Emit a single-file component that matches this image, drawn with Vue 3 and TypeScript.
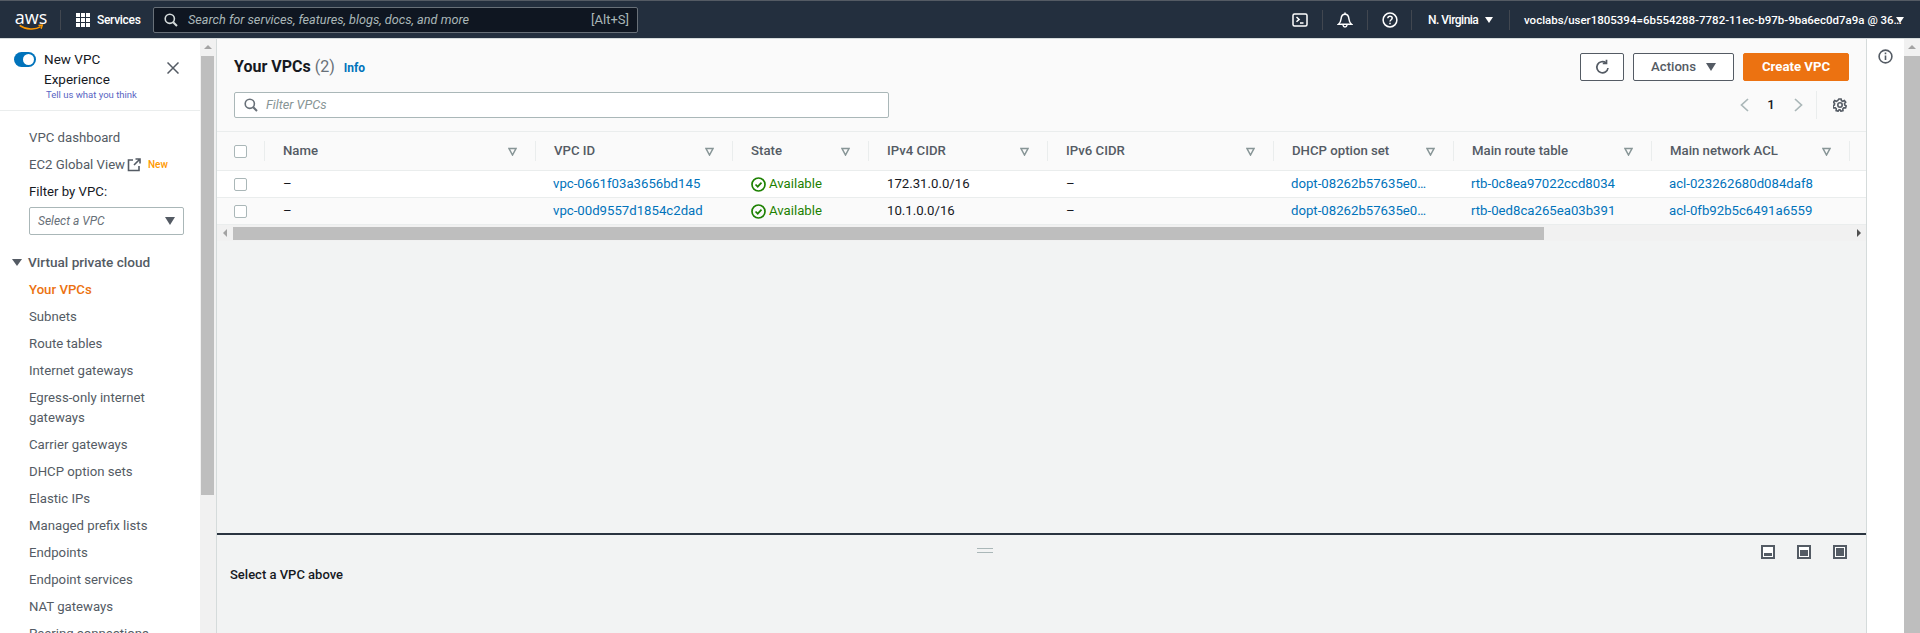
<script setup lang="ts">
interface Vpc {
  id: string
  cidr: string
  dhcp: string
  route: string
  acl: string
}

const columns = ['Name', 'VPC ID', 'State', 'IPv4 CIDR', 'IPv6 CIDR', 'DHCP option set', 'Main route table', 'Main network ACL']

const vpcs: Vpc[] = [
  { id: 'vpc-0661f03a3656bd145', cidr: '172.31.0.0/16', dhcp: 'dopt-08262b57635e0…', route: 'rtb-0c8ea97022ccd8034', acl: 'acl-023262680d084daf8' },
  { id: 'vpc-00d9557d1854c2dad', cidr: '10.1.0.0/16', dhcp: 'dopt-08262b57635e0…', route: 'rtb-0ed8ca265ea03b391', acl: 'acl-0fb92b5c6491a6559' },
]

const navItems = [
  'Subnets',
  'Route tables',
  'Internet gateways',
  'Egress-only internet gateways',
  'Carrier gateways',
  'DHCP option sets',
  'Elastic IPs',
  'Managed prefix lists',
  'Endpoints',
  'Endpoint services',
  'NAT gateways',
  'Peering connections',
]
</script>

<template>
  <div class="console">
    <header class="topbar">
      <div class="logo">
        <span class="logo-text">aws</span>
        <svg width="28" height="8" viewBox="0 0 28 8"><path d="M1 1.500C8 6.500 19 7 25 3" fill="none" stroke="#ff9900" stroke-width="1.800" /><path d="M22.500 1.500L27 1.200 25.600 5.400" fill="none" stroke="#ff9900" stroke-width="1.500" /></svg>
      </div>
      <i class="bar-sep sep-logo"></i>
      <svg class="grid-icon" width="14" height="14" viewBox="0 0 14 14" fill="#fff">
        <template v-for="y in [0, 5, 10]" :key="y">
          <rect v-for="x in [0, 5, 10]" :key="x" :x="x" :y="y" width="4" height="4" />
        </template>
      </svg>
      <span class="services">Services</span>
      <div class="search">
        <svg width="14" height="14" viewBox="0 0 14 14" fill="none" stroke="#d5dbdb" stroke-width="1.600"><circle cx="5.800" cy="5.800" r="4.600" /><path d="M9.200 9.200L13 13" stroke-width="2" /></svg>
        <span class="search-text">Search for services, features, blogs, docs, and more</span>
        <span class="search-key">[Alt+S]</span>
      </div>
      <div class="bar-right">
        <svg width="16" height="14" viewBox="0 0 16 14" fill="none" stroke="#fff" stroke-width="1.500"><rect x="1" y="1" width="14" height="12" rx="1.500" /><path d="M4.500 4l2.600 2.400-2.600 2.400M8 10h3.500" /></svg>
        <i class="bar-sep sep-a"></i>
        <svg width="16" height="16" viewBox="0 0 16 16" fill="none" stroke="#fff" stroke-width="1.500"><path d="M1.500 12.200c2-1.700 2.400-2.800 2.600-5.400C4.300 4 5.800 2.200 8 2.200s3.700 1.800 3.900 4.600c.2 2.600.6 3.700 2.600 5.400z" /><path d="M6 13c.2 1.400 1 2 2 2s1.800-.6 2-2M8 .5v1.700" /></svg>
        <i class="bar-sep sep-a"></i>
        <svg width="16" height="16" viewBox="0 0 16 16" fill="none" stroke="#fff" stroke-width="1.500"><circle cx="8" cy="8" r="6.900" /><path d="M5.800 6.200C5.900 4.900 6.800 4.200 8 4.200c1.300 0 2.200.8 2.200 1.900 0 1.700-2.200 1.600-2.200 3.500" /><path d="M8 10.800v1.500" /></svg>
        <i class="bar-sep sep-b"></i>
        <span class="region">N. Virginia</span>
        <i class="caret-white caret-region"></i>
        <i class="bar-sep sep-c"></i>
        <span class="account">voclabs/user1805394=6b554288-7782-11ec-b97b-9ba6ec0d7a9a @ 36…</span>
        <i class="caret-white caret-account"></i>
      </div>
    </header>

    <div class="workspace">
      <aside class="sidebar">
        <div class="experience">
          <span class="toggle"></span>
          <div class="experience-text">
            <div>New VPC</div>
            <div>Experience</div>
            <a class="feedback">Tell us what you think</a>
          </div>
          <svg class="close" width="12" height="12" viewBox="0 0 12 12" stroke="#545b64" stroke-width="1.500"><path d="M.5.5l11 11M11.500.5l-11 11" /></svg>
        </div>
        <nav class="nav">
          <a class="nav-item">VPC dashboard</a>
          <a class="nav-item nav-global">
            <span class="global-label">EC2 Global View</span>
            <svg width="14" height="14" viewBox="0 0 14 14" fill="none" stroke="#545b64" stroke-width="1.600"><path d="M6 2H1.500v10.500H12V8M7 7l6-6M8.500 1H13v4.500" /></svg>
            <span class="new-tag">New</span>
          </a>
          <div class="nav-item filter-label">Filter by VPC:</div>
          <div class="vpc-select"><span>Select a VPC</span><i class="caret-dark"></i></div>
          <div class="nav-section"><i class="caret-section"></i>Virtual private cloud</div>
          <a class="nav-item active">Your VPCs</a>
          <a v-for="item in navItems" :key="item" class="nav-item">{{ item }}</a>
        </nav>
      </aside>
      <div class="scrollbar">
        <i class="arrow-up"></i>
        <div class="thumb left-thumb"></div>
      </div>

      <main class="main">
        <section class="list-head">
          <div class="head-row">
            <h1 class="title">Your VPCs <span class="count">(2)</span></h1>
            <a class="info">Info</a>
            <div class="actions">
              <button class="btn btn-icon">
                <svg width="15" height="16" viewBox="0 0 15 16" fill="none" stroke="#545b64" stroke-width="1.700"><path d="M13 9a5.600 5.600 0 1 1-2-5.100" /><path d="M11.500 .8v3.700H7.800" /></svg>
              </button>
              <button class="btn btn-actions">Actions<i class="caret-dark"></i></button>
              <button class="btn btn-primary">Create VPC</button>
            </div>
          </div>
          <div class="filter-row">
            <div class="filter-input">
              <svg width="14" height="14" viewBox="0 0 14 14" fill="none" stroke="#687078" stroke-width="1.600"><circle cx="5.800" cy="5.800" r="4.600" /><path d="M9.200 9.200L13 13" stroke-width="2" /></svg>
              <span>Filter VPCs</span>
            </div>
            <div class="pager">
              <svg width="9" height="14" viewBox="0 0 9 14" fill="none" stroke="#aab7b8" stroke-width="1.700"><path d="M8 1L1.500 7 8 13" /></svg>
              <b>1</b>
              <svg width="9" height="14" viewBox="0 0 9 14" fill="none" stroke="#aab7b8" stroke-width="1.700"><path d="M1 1l6.500 6L1 13" /></svg>
              <i class="pager-sep"></i>
              <svg width="14" height="14" viewBox="0 0 14 14" fill="none" stroke="#545b64" stroke-width="1.600"><circle cx="7" cy="7" r="2.200" /><path d="M5.900 1h2.200l.4 1.700 1.300.6 1.600-.8 1.300 1.700-1.200 1.300.2 1.500 1.500.9-.6 2-1.800-.1-1 1.100.2 1.800-2.100.5-.9-1.500H6.100l-1 1.500-2-.6.200-1.800-1-1.100-1.800.1-.6-2 1.500-.9.200-1.500L.4 4.200l1.300-1.700 1.600.8 1.300-.6z" /></svg>
            </div>
          </div>
        </section>

        <section class="table">
          <div class="tr th-row">
            <div class="cell-check head-check"><i class="check"></i></div>
            <div v-for="col in columns" :key="col" class="th">
              <span>{{ col }}</span>
              <svg width="9" height="9" viewBox="0 0 9 9" fill="none" stroke="#879596" stroke-width="1.500"><path d="M1 1.500h7L4.500 8z" /></svg>
            </div>
          </div>
          <div v-for="vpc in vpcs" :key="vpc.id" class="tr body-row">
            <div class="cell-check"><i class="check"></i></div>
            <div class="td">–</div>
            <a class="td link">{{ vpc.id }}</a>
            <div class="td state">
              <svg width="15" height="15" viewBox="0 0 15 15" fill="none" stroke="#1d8102" stroke-width="1.700"><circle cx="7.500" cy="7.500" r="6.500" /><path d="M4.500 7.500l2.200 2.200 3.800-4" /></svg>
              Available
            </div>
            <div class="td">{{ vpc.cidr }}</div>
            <div class="td">–</div>
            <a class="td link">{{ vpc.dhcp }}</a>
            <a class="td link">{{ vpc.route }}</a>
            <a class="td link">{{ vpc.acl }}</a>
          </div>
          <div class="h-scroll">
            <i class="arrow-left"></i>
            <div class="h-thumb"></div>
            <i class="arrow-right"></i>
          </div>
        </section>

        <div class="spacer"></div>

        <section class="detail">
          <div class="drag-handle"></div>
          <div class="detail-row">
            <strong>Select a VPC above</strong>
            <div class="panel-icons">
              <span class="panel-icon"><i class="fill-low"></i></span>
              <span class="panel-icon"><i class="fill-mid"></i></span>
              <span class="panel-icon"><i class="fill-full"></i></span>
            </div>
          </div>
        </section>
      </main>

      <aside class="tools">
        <svg width="15" height="15" viewBox="0 0 15 15" fill="none" stroke="#545b64" stroke-width="1.600"><circle cx="7.500" cy="7.500" r="6.400" /><path d="M7.500 6.500v4.500M7.500 3.500v1.800" /></svg>
      </aside>
      <div class="scrollbar">
        <i class="arrow-up"></i>
        <div class="thumb right-thumb"></div>
      </div>
    </div>
  </div>
</template>

<style>
html, body { margin: 0; background: #fff; overflow: hidden; }
</style>

<style scoped>
.console {
  width: 1920px;
  height: 633px;
  overflow: hidden;
  display: flex;
  flex-direction: column;
  font-family: Roboto, "Noto Sans", sans-serif;
  font-size: 13.200px;
  line-height: 20px;
  color: #16191f;
}
i { display: block; font-style: normal; }
a { color: inherit; }

.topbar {
  height: 38px;
  flex: none;
  box-sizing: border-box;
  background: #232f3e;
  border-top: 1px solid #545b64;
  display: flex;
  align-items: center;
  color: #fff;
  padding-left: 17px;
}
.logo { width: 28px; display: flex; flex-direction: column; align-items: center; height: 22px; }
.logo-text { font-size: 18px; line-height: 16px; font-family: "Open Sans", sans-serif; font-weight: 400; }
.logo svg { margin-top: -1px; }
.bar-sep { width: 1px; height: 20px; background: #414750; flex: none; }
.sep-logo { margin-left: 15px; }
.grid-icon { margin-left: 15px; }
.services { margin-left: 7px; font-size: 12px; letter-spacing: -.3px; font-weight: 500; width: 56px; }
.search {
  width: 485px;
  height: 26px;
  box-sizing: border-box;
  background: #0f1621;
  border: 1px solid #687078;
  border-radius: 2px;
  display: flex;
  align-items: center;
  padding: 0 8px 0 10px;
  color: #aab7b8;
}
.search-text { margin-left: 10px; font-style: italic; font-size: 12.700px; flex: 1; }
.search-key { font-size: 13px; }
.bar-right { margin-left: 654px; display: flex; align-items: center; }
.sep-a { margin: 0 14px; }
.sep-b { margin: 0 16px 0 13px; }
.sep-c { margin: 0 14px 0 16px; }
.region { font-size: 12px; letter-spacing: -.5px; font-weight: 500; width: 52px; white-space: nowrap; }
.account { font-size: 11.500px; font-weight: 500; white-space: nowrap; width: 367px; }
.caret-white { width: 0; height: 0; border-left: 4px solid transparent; border-right: 4px solid transparent; border-top: 6px solid #fff; }
.caret-region { margin-left: 5px; }
.caret-account { margin-left: 5px; }

.workspace { flex: 1; display: flex; min-height: 0; border-top: 1px solid #d5dbdb; }
.sidebar { width: 200px; flex: none; overflow: hidden; background: #fff; }
.experience {
  height: 61px;
  padding-top: 10px;
  display: flex;
  border-bottom: 1px solid #eaeded;
}
.toggle {
  width: 22px;
  height: 15px;
  margin: 3px 0 0 14px;
  border-radius: 8px;
  background: #0073bb;
  position: relative;
  flex: none;
}
.toggle::after { content: ""; position: absolute; right: 2px; top: 2px; width: 11px; height: 11px; border-radius: 50%; background: #fff; }
.experience-text { margin-left: 8px; width: 123px; font-size: 13.500px; color: #16191f; }
.feedback { display: block; margin: -2px 0 0 2px; font-size: 9.500px; line-height: 16px; color: #5865c3; white-space: nowrap; }
.close { margin-top: 13px; flex: none; }
.nav { padding-top: 17px; }
.nav-item { display: block; padding: 0 15px 7px 29px; color: #545b64; }
.nav-global { display: flex; align-items: center; height: 20px; }
.global-label { width: 98px; white-space: nowrap; }
.new-tag { color: #ff9900; font-size: 10px; font-weight: 500; margin-left: 7px; }
.filter-label { color: #16191f; padding-bottom: 5px; }
.vpc-select {
  margin: 0 16px 17px 29px;
  height: 28px;
  box-sizing: border-box;
  border: 1px solid #aab7b8;
  border-radius: 2px;
  display: flex;
  align-items: center;
  justify-content: space-between;
  padding: 0 8px;
  font-style: italic;
  font-size: 12px;
  color: #687078;
}
.caret-dark { width: 0; height: 0; border-left: 5px solid transparent; border-right: 5px solid transparent; border-top: 8px solid #545b64; }
.nav-section { display: flex; align-items: center; padding: 0 0 8px 12px; font-weight: 500; font-size: 13.600px; color: #545b64; }
.caret-section { width: 0; height: 0; border-left: 5px solid transparent; border-right: 5px solid transparent; border-top: 7px solid #545b64; margin-right: 6px; }
.active { color: #ec7211; font-weight: 500; }

.scrollbar { width: 16px; flex: none; background: #f1f1f1; position: relative; padding-top: 17px; box-sizing: border-box; }
.arrow-up { position: absolute; top: 6px; left: 4px; width: 0; height: 0; border-left: 4px solid transparent; border-right: 4px solid transparent; border-bottom: 4px solid #a3a3a3; }
.thumb { background: #bebebe; }
.left-thumb { height: 439px; margin-left: 1px; width: 13px; }
.right-thumb { height: 600px; }

.main { flex: 1; min-width: 0; display: flex; flex-direction: column; background: #f2f3f3; border-left: 1px solid #d5dbdb; border-right: 1px solid #d5dbdb; }
.list-head { height: 92px; box-sizing: border-box; padding: 14px 17px 0; background: #fafafa; }
.head-row { display: flex; align-items: center; height: 28px; }
.title { margin: 0; font-size: 16px; line-height: 28px; font-weight: 700; }
.count { font-weight: 400; color: #687078; }
.info { margin-left: 9px; font-size: 12px; font-weight: 700; color: #0073bb; padding-top: 1px; }
.actions { margin-left: auto; display: flex; gap: 9px; }
.btn { height: 28px; box-sizing: border-box; border: 1px solid #545b64; border-radius: 2px; background: #fff; font: inherit; font-weight: 500; color: #545b64; display: flex; align-items: center; justify-content: center; padding: 0; }
.btn-icon { width: 44px; }
.btn-actions { width: 101px; gap: 10px; }
.btn-primary { width: 106px; background: #ec7211; border-color: #ec7211; color: #fff; font-weight: 700; }
.filter-row { margin-top: 10px; display: flex; align-items: center; }
.filter-input { width: 655px; height: 26px; box-sizing: border-box; border: 1px solid #aab7b8; border-radius: 2px; background: #fff; display: flex; align-items: center; padding-left: 9px; gap: 8px; font-style: italic; font-size: 12.700px; color: #879596; }
.pager { margin-left: auto; padding-right: 2px; display: flex; align-items: center; height: 28px; }
.pager b { width: 12px; margin: 0 17px 0 16px; font-weight: 500; color: #16191f; text-align: center; }
.pager-sep { width: 1px; height: 28px; background: #eaeded; margin: 0 16px 0 13px; }

.table { flex: none; }
.tr { display: grid; grid-template-columns: 48px 271px 197px 136px 179px 226px 180px 198px 198px 1fr; }
.th-row { height: 40px; box-sizing: border-box; background: #fafafa; border-top: 1px solid #eaeded; border-bottom: 1px solid #eaeded; align-items: center; }
.body-row { height: 27px; box-sizing: border-box; background: #fff; border-bottom: 1px solid #eaeded; align-items: center; }
.body-row:nth-child(3) { background: #fafafa; }
.cell-check { padding-left: 17px; display: flex; align-items: center; }
.head-check { height: 20px; border-right: 1px solid #eaeded; }
.check { width: 13px; height: 13px; box-sizing: border-box; border: 1px solid #aab7b8; border-radius: 2px; background: #fff; }
.th { height: 20px; display: flex; align-items: center; justify-content: space-between; padding: 0 18px; border-right: 1px solid #eaeded; font-weight: 500; color: #545b64; white-space: nowrap; }
.td { padding-left: 18px; white-space: nowrap; }
.link { color: #0073bb; padding-left: 17px; }
.state { display: flex; align-items: center; gap: 3px; color: #1d8102; }
.h-scroll { height: 16px; background: #f1f1f1; display: flex; align-items: center; position: relative; }
.arrow-left { margin-left: 6px; width: 0; height: 0; border-top: 4px solid transparent; border-bottom: 4px solid transparent; border-right: 4px solid #a3a3a3; }
.h-thumb { position: absolute; left: 16px; width: 1311px; height: 13px; top: 2px; background: #bebebe; }
.arrow-right { margin-left: auto; margin-right: 5px; width: 0; height: 0; border-top: 4px solid transparent; border-bottom: 4px solid transparent; border-left: 4px solid #505050; }
.spacer { flex: 1; }
.detail { height: 100px; flex: none; box-sizing: border-box; border-top: 2px solid #2a3440; position: relative; }
.drag-handle { position: absolute; left: 760px; top: 13px; width: 16px; height: 5px; box-sizing: border-box; border-top: 1px solid #aab7b8; border-bottom: 1px solid #aab7b8; }
.detail-row { display: flex; align-items: flex-start; padding: 10px 19px 0 13px; }
.detail-row strong { margin-top: 20px; font-size: 13px; font-weight: 500; }
.panel-icons { margin-left: auto; display: flex; gap: 22px; }
.panel-icon { width: 14px; height: 14px; box-sizing: border-box; border: 2px solid #545b64; position: relative; background: #fff; display: block; }
.panel-icon i { position: absolute; left: 1px; right: 1px; bottom: 1px; background: #545b64; }
.fill-low { height: 3px; }
.fill-mid { height: 6px; }
.fill-full { height: 8px; }

.tools { width: 37px; flex: none; background: #fff; padding: 10px 0 0 11px; box-sizing: border-box; }
</style>
